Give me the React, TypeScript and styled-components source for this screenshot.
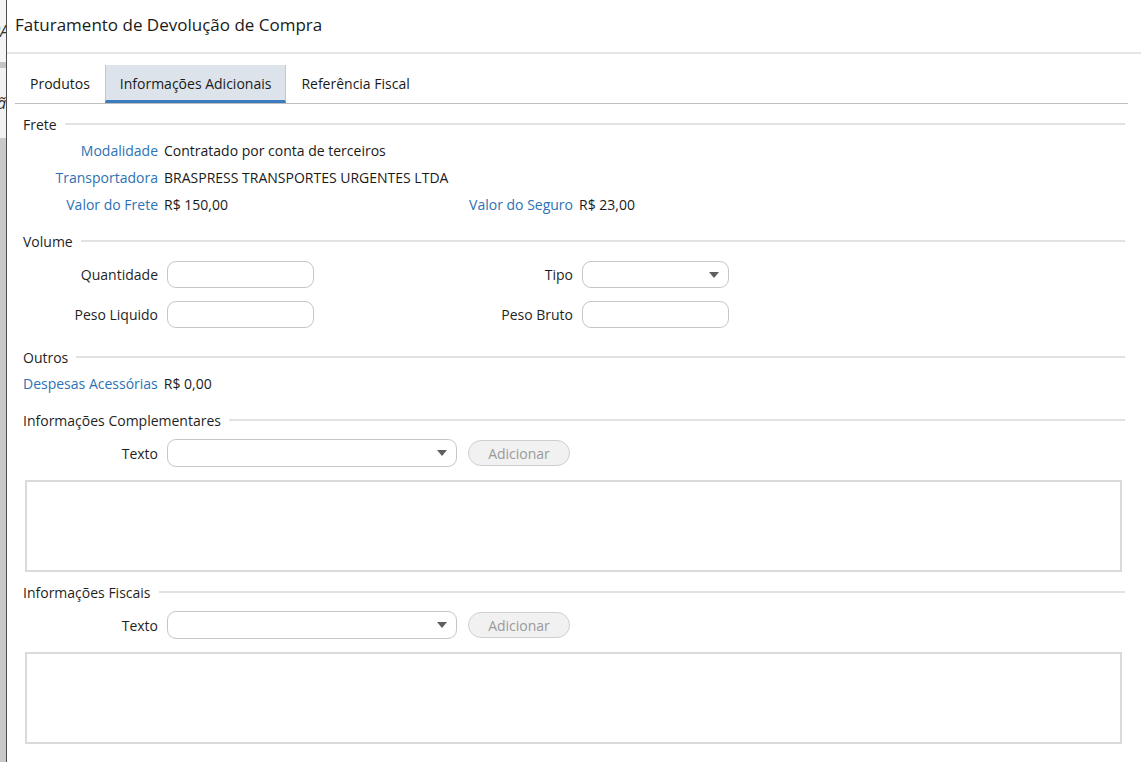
import React from 'react';
import styled, { createGlobalStyle } from 'styled-components';

const GlobalStyle = createGlobalStyle`
  html, body {
    margin: 0;
    padding: 0;
    background: #ffffff;
  }
  body {
    font-family: 'Open Sans', 'Noto Sans', sans-serif;
    color: #1c1c1c;
  }
`;

const Screen = styled.div`
  display: flex;
  width: 1141px;
  height: 762px;
  overflow: hidden;
`;

const Backdrop = styled.div`
  width: 6px;
  flex-shrink: 0;
  display: flex;
  flex-direction: column;
  overflow: hidden;
  background: #c9c9c9;
`;

const BackdropTop = styled.div`
  height: 62px;
  background: #f4f4f4;
  display: flex;
  align-items: center;
`;

const BackdropBand = styled.div`
  height: 6px;
  background: #c4c4c4;
`;

const BackdropMid = styled.div`
  height: 70px;
  background: #f2f2f2;
  display: flex;
  align-items: center;
`;

const Fragment = styled.span<{ $shift: number }>`
  font-size: 16px;
  font-style: italic;
  color: #333;
  white-space: nowrap;
  margin-left: ${({ $shift }) => $shift}px;
`;

const Dialog = styled.div`
  flex: 1;
  border-left: 1px solid #4d4d4d;
  display: flex;
  flex-direction: column;
  background: #fff;
`;

const Header = styled.div`
  height: 48px;
  padding: 0 0 4px 8px;
  display: flex;
  align-items: center;
  font-size: 17px;
  color: #1a1a1a;
  border-bottom: 2px solid #e6e6e6;
`;

const TabBar = styled.div`
  margin: 11px 13px 0 8px;
  display: flex;
  border-bottom: 1px solid #bdbdbd;
`;

const Tab = styled.div<{ $active?: boolean }>`
  height: 34px;
  padding: 1px 14px 0;
  display: flex;
  align-items: center;
  font-size: 14px;
  color: #1a1a1a;
  background: ${({ $active }) => ($active ? '#dce3eb' : 'transparent')};
  border-left: 1px solid ${({ $active }) => ($active ? '#c3c7cc' : 'transparent')};
  border-right: 1px solid ${({ $active }) => ($active ? '#c3c7cc' : 'transparent')};
  border-bottom: 3px solid ${({ $active }) => ($active ? '#3c7bbf' : 'transparent')};
`;

const Content = styled.div`
  padding: 10px 16px 0 16px;
  display: flex;
  flex-direction: column;
`;

const SectionTitle = styled.div<{ $gap?: number }>`
  height: 20px;
  display: flex;
  align-items: center;
  gap: 8px;
  font-size: 14px;
  color: #1f1f1f;
  margin-top: ${({ $gap }) => $gap ?? 0}px;

  &::after {
    content: '';
    flex: 1;
    height: 2px;
    background: #e2e2e2;
  }
`;

const FieldGrid = styled.div<{ $row: number; $gap?: number; $top: number }>`
  display: grid;
  grid-template-columns: 135px 250px 153px 1fr;
  grid-auto-rows: ${({ $row }) => $row}px;
  column-gap: 6px;
  row-gap: ${({ $gap }) => $gap ?? 0}px;
  align-items: center;
  margin-top: ${({ $top }) => $top}px;
`;

const Label = styled.div<{ $blue?: boolean }>`
  text-align: right;
  font-size: 14px;
  white-space: nowrap;
  color: ${({ $blue }) => ($blue ? '#2d72b5' : '#1f1f1f')};
`;

const Value = styled.div`
  font-size: 14px;
  color: #1a1a1a;
  white-space: nowrap;
`;

const InlinePair = styled.div<{ $top: number }>`
  display: flex;
  align-items: center;
  gap: 6px;
  height: 27px;
  margin-top: ${({ $top }) => $top}px;
`;

const TextInput = styled.div`
  width: 147px;
  height: 27px;
  margin-left: 3px;
  box-sizing: border-box;
  border: 1.5px solid #c6c6c6;
  border-radius: 9px;
  background: #fff;
`;

const SelectBox = styled.div<{ $width: number; $height?: number }>`
  width: ${({ $width }) => $width}px;
  height: ${({ $height }) => $height ?? 28}px;
  margin-left: 3px;
  box-sizing: border-box;
  border: 1.5px solid #c6c6c6;
  border-radius: 9px;
  background: #fff;
  display: flex;
  align-items: center;
  justify-content: flex-end;
  padding-right: 9px;
`;

const Caret = styled.span`
  width: 0;
  height: 0;
  border-left: 5.5px solid transparent;
  border-right: 5.5px solid transparent;
  border-top: 6px solid #5f5f5f;
`;

const AddRow = styled.div<{ $top: number }>`
  display: grid;
  grid-template-columns: 135px auto;
  column-gap: 6px;
  align-items: center;
  justify-content: start;
  height: 28px;
  margin-top: ${({ $top }) => $top}px;
`;

const Controls = styled.div`
  display: flex;
  align-items: center;
  gap: 11px;
`;

const AddButton = styled.div`
  width: 102px;
  height: 26px;
  box-sizing: border-box;
  border: 1.5px solid #cfcfcf;
  border-radius: 13px;
  background: #f1f1f1;
  color: #9a9a9a;
  font-size: 14px;
  display: flex;
  align-items: center;
  justify-content: center;
`;

const TextArea = styled.div<{ $top: number; $height: number }>`
  height: ${({ $height }) => $height}px;
  margin: ${({ $top }) => $top}px 3px 0 2px;
  box-sizing: border-box;
  border: 2px solid #dadada;
  background: #fff;
`;

const Field = ({ label, value }: { label: string; value: string }) => (
  <>
    <Label $blue>{label}</Label>
    <Value>{value}</Value>
  </>
);

const TextPicker = ({ top }: { top: number }) => (
  <AddRow $top={top}>
    <Label>Texto</Label>
    <Controls>
      <SelectBox $width={290}>
        <Caret />
      </SelectBox>
      <AddButton>Adicionar</AddButton>
    </Controls>
  </AddRow>
);

const App: React.FC = () => {
  return (
    <>
      <GlobalStyle />
      <Screen>
        <Backdrop>
          <BackdropTop>
            <Fragment $shift={-9}>PA</Fragment>
          </BackdropTop>
          <BackdropBand />
          <BackdropMid>
            <Fragment $shift={-3}>ã</Fragment>
          </BackdropMid>
        </Backdrop>
        <Dialog>
          <Header>Faturamento de Devolução de Compra</Header>
          <TabBar>
            <Tab>Produtos</Tab>
            <Tab $active>Informações Adicionais</Tab>
            <Tab>Referência Fiscal</Tab>
          </TabBar>

          <Content>
            <SectionTitle>Frete</SectionTitle>
            <FieldGrid $row={27} $top={3}>
              <Field label="Modalidade" value="Contratado por conta de terceiros" />
              <div />
              <div />
              <Field label="Transportadora" value="BRASPRESS TRANSPORTES URGENTES LTDA" />
              <div />
              <div />
              <Field label="Valor do Frete" value="R$ 150,00" />
              <Field label="Valor do Seguro" value="R$ 23,00" />
            </FieldGrid>

            <SectionTitle $gap={13}>Volume</SectionTitle>
            <FieldGrid $row={27} $gap={13} $top={10}>
              <Label>Quantidade</Label>
              <TextInput />
              <Label>Tipo</Label>
              <SelectBox $width={147} $height={27}>
                <Caret />
              </SelectBox>
              <Label>Peso Liquido</Label>
              <TextInput />
              <Label>Peso Bruto</Label>
              <TextInput />
            </FieldGrid>

            <SectionTitle $gap={19}>Outros</SectionTitle>
            <InlinePair $top={3}>
              <Label $blue>Despesas Acessórias</Label>
              <Value>R$ 0,00</Value>
            </InlinePair>

            <SectionTitle $gap={13}>Informações Complementares</SectionTitle>
            <TextPicker top={9} />
            <TextArea $top={13} $height={92} />

            <SectionTitle $gap={10}>Informações Fiscais</SectionTitle>
            <TextPicker top={9} />
            <TextArea $top={13} $height={92} />
          </Content>
        </Dialog>
      </Screen>
    </>
  );
};

export default App;
